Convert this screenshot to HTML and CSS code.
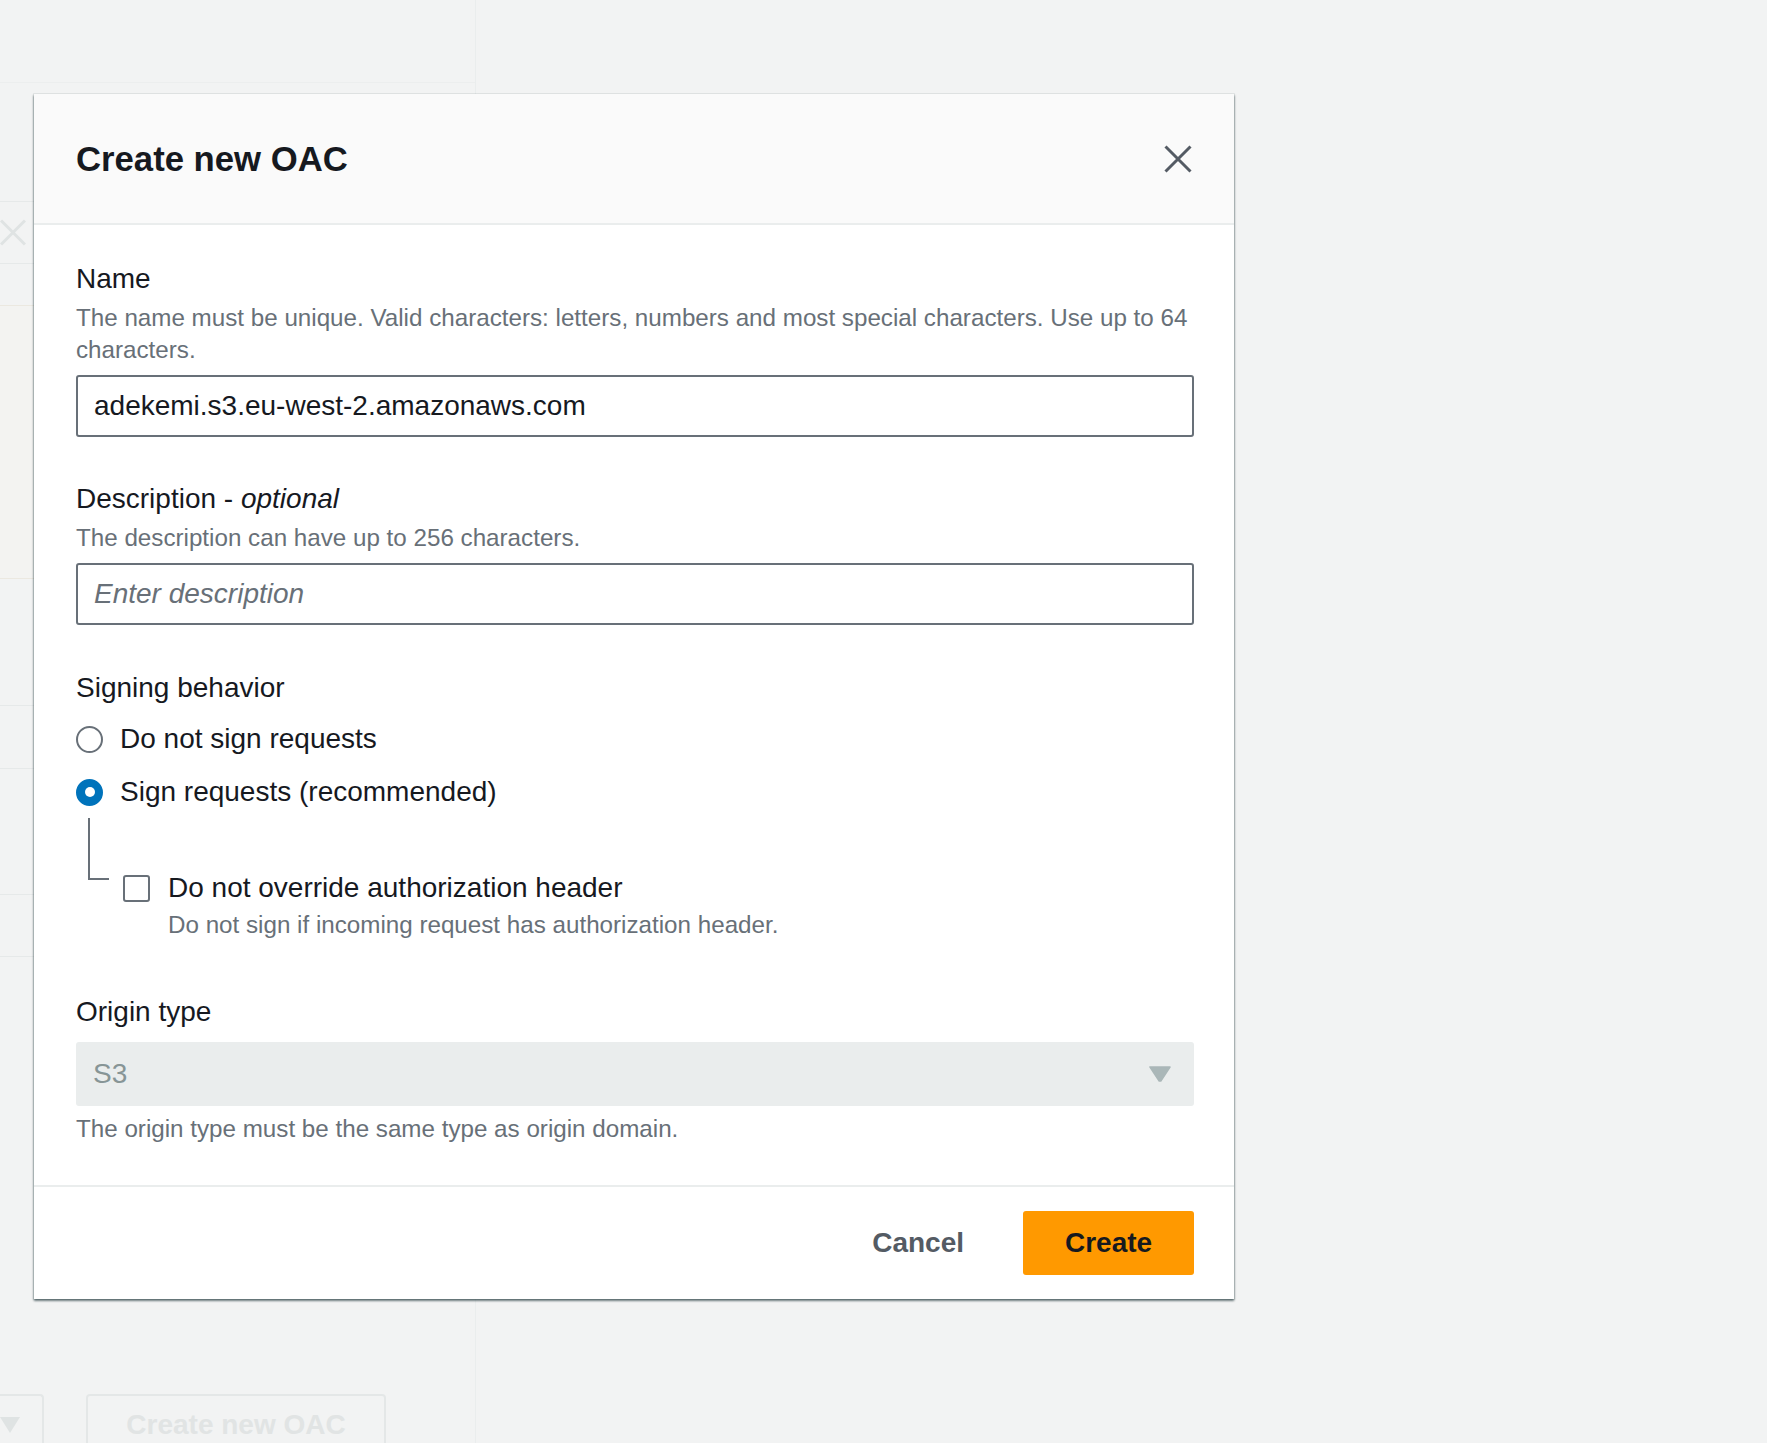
FILE: index.html
```html
<!DOCTYPE html>
<html lang="en">
<head>
<meta charset="utf-8">
<title>Create new OAC</title>
<link rel="stylesheet" href="styles.css">
</head>
<body>
<div class="page">
  <aside class="bg-panel">
    <div class="bg-row bg-top"></div>
    <div class="bg-row bg-r1"></div>
    <div class="bg-row bg-r2">
      <svg class="bg-x" width="26" height="27" viewBox="0 0 26 27"><path d="M1 1.5 L25 25.5 M25 1.5 L1 25.5" stroke="#dfe3e3" stroke-width="3" fill="none"/></svg>
    </div>
    <div class="bg-row bg-r3 bg-warm-line"></div>
    <div class="bg-row bg-warm bg-warm-line"></div>
    <div class="bg-row bg-r5"></div>
    <div class="bg-row bg-r6"></div>
    <div class="bg-row bg-r7"></div>
    <div class="bg-row bg-r8"></div>
    <div class="bg-actions">
      <div class="bg-select"><span class="bg-caret"></span></div>
      <div class="bg-button">Create new OAC</div>
    </div>
  </aside>
  <div class="bg-main"></div>
</div>

<div class="modal" role="dialog" aria-labelledby="modal-title">
  <header class="modal-header">
    <h2 class="modal-title" id="modal-title">Create new OAC</h2>
    <button class="modal-close" type="button" aria-label="Close">
      <svg width="28" height="28" viewBox="0 0 28 28"><path d="M1.5 1.5 L26.5 26.5 M26.5 1.5 L1.5 26.5" stroke="#545b64" stroke-width="3" fill="none"/></svg>
    </button>
  </header>

  <div class="modal-body">
    <div class="field">
      <label class="field-label" for="oac-name">Name</label>
      <p class="field-desc">The name must be unique. Valid characters: letters, numbers and most special characters. Use up to 64 characters.</p>
      <input class="text-input" id="oac-name" type="text" value="adekemi.s3.eu-west-2.amazonaws.com">
    </div>

    <div class="field field-gap">
      <label class="field-label" for="oac-desc">Description - <i>optional</i></label>
      <p class="field-desc">The description can have up to 256 characters.</p>
      <input class="text-input" id="oac-desc" type="text" placeholder="Enter description">
    </div>

    <div class="field field-gap-lg">
      <div class="field-label">Signing behavior</div>
      <div class="radio-group">
        <div class="radio-row"><span class="radio"></span><span>Do not sign requests</span></div>
        <div class="radio-row"><span class="radio radio-checked"></span><span>Sign requests (recommended)</span></div>
      </div>
      <div class="nested">
        <div class="tree-line"></div>
        <div class="check-field">
          <div class="check-row"><span class="checkbox"></span><span>Do not override authorization header</span></div>
          <p class="field-desc check-desc">Do not sign if incoming request has authorization header.</p>
        </div>
      </div>
    </div>

    <div class="field field-gap-xl">
      <div class="field-label">Origin type</div>
      <div class="select-box">
        <span class="select-value">S3</span>
        <svg class="select-caret" width="22" height="16" viewBox="0 0 22 16"><path d="M1 1 L21 1 L11.8 15 L10.2 15 Z" fill="#aab7b8" stroke="#aab7b8" stroke-width="1.5" stroke-linejoin="round"/></svg>
      </div>
      <p class="field-desc help-desc">The origin type must be the same type as origin domain.</p>
    </div>
  </div>

  <footer class="modal-footer">
    <button class="btn-link" type="button">Cancel</button>
    <button class="btn-primary" type="button">Create</button>
  </footer>
</div>
</body>
</html>
```

FILE: styles.css
```css
html, body {
  margin: 0;
  padding: 0;
  height: 1443px;
  overflow: hidden;
  background: #f2f3f3;
  font-family: "Liberation Sans", Arial, sans-serif;
  color: #16191f;
}

.page {
  display: flex;
  height: 1443px;
}

/* faded page behind the modal */
.bg-panel {
  width: 475px;
  flex: none;
  border-right: 1px solid #eaeded;
  display: flex;
  flex-direction: column;
  overflow: hidden;
}

.bg-row {
  border-bottom: 1px solid #e6e9e9;
  flex: none;
}

.bg-top { height: 82px; border-bottom-color: #eceeee; }
.bg-r1 { height: 118px; }
.bg-r2 { height: 61px; display: flex; align-items: center; }
.bg-r3 { height: 41px; }
.bg-warm { height: 272px; background: #f3f3f1; }
.bg-warm-line { border-bottom-color: #ebe8e0; }
.bg-r5 { height: 126px; }
.bg-r6 { height: 62px; }
.bg-r7 { height: 125px; }
.bg-r8 { height: 61px; }

.bg-x { display: block; }

.bg-actions {
  margin-top: 437px;
  display: flex;
  align-items: flex-start;
}

.bg-select {
  width: 44px;
  height: 70px;
  box-sizing: border-box;
  border-top: 2px solid #e4e7e7;
  border-right: 2px solid #e4e7e7;
  border-top-right-radius: 4px;
  padding-top: 21px;
}

.bg-caret {
  display: block;
  width: 0;
  height: 0;
  border-left: 10.5px solid transparent;
  border-right: 10.5px solid transparent;
  border-top: 16px solid #dfe3e3;
}

.bg-button {
  margin-left: 42px;
  width: 300px;
  height: 70px;
  box-sizing: border-box;
  border: 2px solid #e4e7e7;
  border-radius: 4px;
  padding-top: 11px;
  text-align: center;
  font-weight: 700;
  font-size: 28px;
  line-height: 36px;
  color: #e1e4e4;
}

.bg-main { flex: 1; }

/* modal */
.modal {
  position: absolute;
  left: 34px;
  top: 94px;
  width: 1200px;
  background: #ffffff;
  box-shadow: 0 0 0 1px rgba(0, 28, 36, 0.06), 0 2px 2px 0 rgba(0, 28, 36, 0.45), 1px 1px 2px 0 rgba(0, 28, 36, 0.18), -1px 1px 2px 0 rgba(0, 28, 36, 0.18);
}

.modal-header {
  display: flex;
  align-items: center;
  justify-content: space-between;
  background: #fafafa;
  padding: 43px 42px 42px 42px;
  border-bottom: 2px solid #eaeded;
}

.modal-title {
  margin: 0;
  font-size: 34.7px;
  line-height: 44px;
  font-weight: 700;
  color: #16191f;
}

.modal-close {
  border: 0;
  background: none;
  padding: 0;
  margin: 0;
  width: 28px;
  height: 28px;
  cursor: pointer;
}

.modal-close svg { display: block; }

.modal-body {
  padding: 36px 40px 40px 42px;
}

.field { display: flex; flex-direction: column; }
.field-gap { margin-top: 44px; }
.field-gap-lg { margin-top: 45px; }
.field-gap-xl { margin-top: 53px; }

.field-label {
  font-size: 28px;
  line-height: 36px;
  color: #16191f;
}

.field-desc {
  margin: 5px 0 0 0;
  font-size: 24.2px;
  line-height: 32px;
  color: #687078;
}

.text-input {
  display: block;
  margin-top: 9px;
  width: 100%;
  height: 62px;
  box-sizing: border-box;
  border: 2px solid #687078;
  border-radius: 3px;
  padding: 0 16px;
  font-family: "Liberation Sans", Arial, sans-serif;
  font-size: 28px;
  color: #16191f;
  background: #ffffff;
  outline: none;
}

.text-input::placeholder {
  color: #687078;
  font-style: italic;
}

.radio-group {
  display: flex;
  flex-direction: column;
  gap: 17px;
  margin-top: 15px;
}

.radio-row {
  display: flex;
  align-items: center;
  gap: 17px;
  font-size: 28px;
  line-height: 36px;
}

.radio {
  width: 27px;
  height: 27px;
  box-sizing: border-box;
  border: 2px solid #687078;
  border-radius: 50%;
  background: #ffffff;
  flex: none;
  display: flex;
  align-items: center;
  justify-content: center;
}

.radio-checked {
  background: #0073bb;
  border-color: #0073bb;
}

.radio-checked::after {
  content: "";
  width: 10px;
  height: 10px;
  border-radius: 50%;
  background: #ffffff;
}

.nested {
  display: flex;
  align-items: flex-start;
  margin-top: 8px;
  padding-left: 12px;
}

.tree-line {
  flex: none;
  width: 21px;
  height: 62px;
  box-sizing: border-box;
  border-left: 2px solid #687078;
  border-bottom: 2px solid #687078;
}

.check-field {
  margin-left: 14px;
  margin-top: 52px;
}

.check-row {
  display: flex;
  align-items: center;
  gap: 18px;
  font-size: 28px;
  line-height: 36px;
}

.checkbox {
  flex: none;
  width: 27px;
  height: 27px;
  box-sizing: border-box;
  border: 2px solid #687078;
  border-radius: 3px;
  background: #ffffff;
}

.check-desc {
  margin-top: 3px;
  padding-left: 45px;
}

.select-box {
  margin-top: 12px;
  height: 64px;
  box-sizing: border-box;
  background: #eaeded;
  border-radius: 3px;
  padding: 0 23px 0 17px;
  display: flex;
  align-items: center;
  justify-content: space-between;
}

.select-value {
  font-size: 28px;
  color: #879596;
}

.select-caret { display: block; }

.help-desc { margin-top: 7px; }

.modal-footer {
  border-top: 2px solid #eaeded;
  padding: 24px 40px 24px 42px;
  display: flex;
  justify-content: flex-end;
  align-items: center;
  gap: 17px;
}

.btn-link {
  border: 0;
  background: none;
  padding: 0 42px;
  height: 64px;
  font-family: "Liberation Sans", Arial, sans-serif;
  font-size: 28px;
  font-weight: 700;
  color: #545b64;
  cursor: pointer;
}

.btn-primary {
  border: 0;
  background: #ff9900;
  border-radius: 3px;
  padding: 0 42px;
  height: 64px;
  width: 171px;
  font-family: "Liberation Sans", Arial, sans-serif;
  font-size: 28px;
  font-weight: 700;
  color: #16191f;
  cursor: pointer;
}
```
